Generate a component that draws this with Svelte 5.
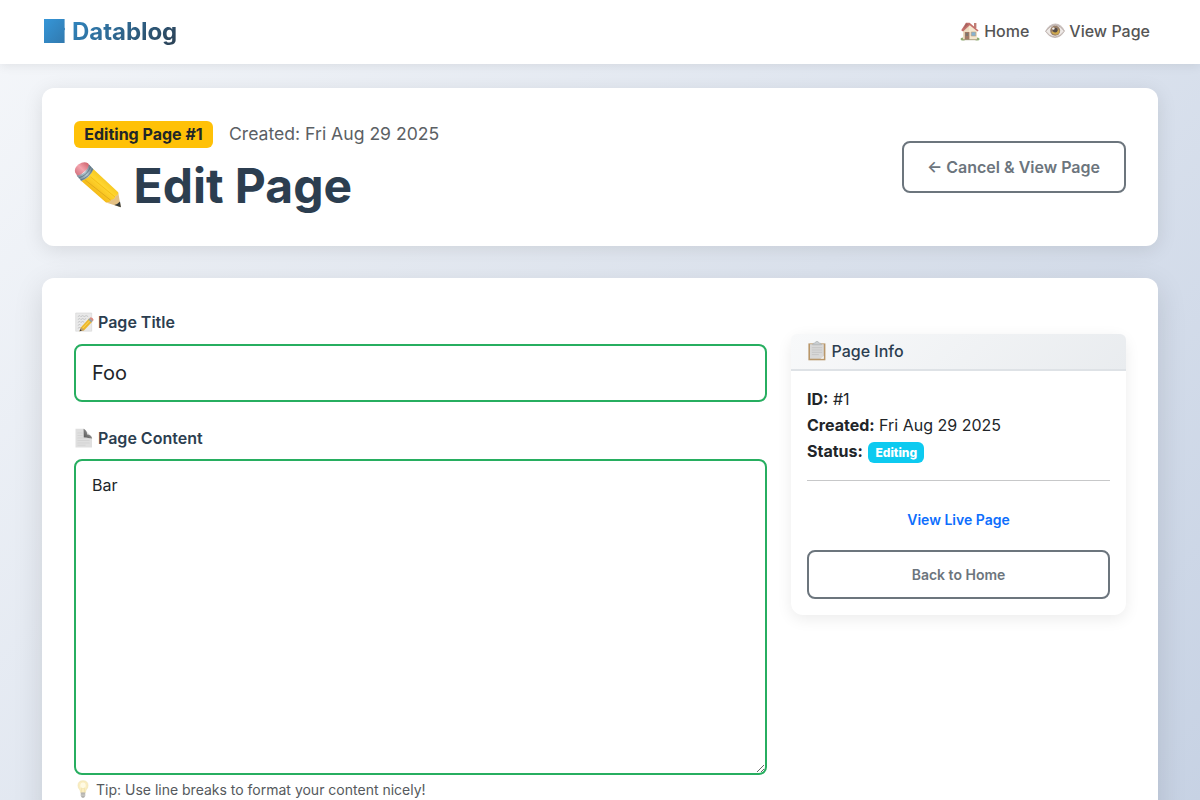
<script>
  let title = $state('Foo');
  let content = $state('Bar');
</script>

<div class="page">
  <header class="nav">
    <a class="brand" href="#home">
      <svg class="book" viewBox="0 0 22 24" width="22" height="24" aria-hidden="true">
        <defs>
          <linearGradient id="bookfill" x1="0" y1="0" x2="1" y2="1">
            <stop offset="0" stop-color="#3596d8" />
            <stop offset="1" stop-color="#3179ae" />
          </linearGradient>
        </defs>
        <path d="M0 0H20.6V8.5Q21.6 10 20.6 11.5V24H0Z" fill="url(#bookfill)" />
      </svg>
      <span>Datablog</span>
    </a>
    <nav class="links">
      <a href="#home">
        <svg viewBox="0 0 20 20" width="20" height="20" aria-hidden="true">
          <ellipse cx="3" cy="18" rx="2.5" ry="1.5" fill="#8fae72" />
          <ellipse cx="17.2" cy="18" rx="2.4" ry="1.5" fill="#8fae72" />
          <path d="M14 2h2.4v5H14z" fill="#c07e74" />
          <path d="M3 9L9.8 3L16.6 9V18.7H3z" fill="#eddcc2" />
          <path d="M9 3.1L16.9 10V18.7H9V9z" fill="#f5e7ce" />
          <path d="M1.2 9.2L6 1.8H9.6L18.6 9.5L17.5 10.6L9.8 4.2L3 10.5z" fill="#c4706c" />
          <path d="M6 2.2L3.5 8L8.3 3.3" fill="#a3645f" />
          <path d="M4.8 11h4.6v7.8H4.8z" fill="#a17a66" />
          <path d="M5.7 12h2.5v3H5.7z" fill="#7c766e" />
          <path d="M11.2 11h4.6v4h-4.6z" fill="#86b2d0" stroke="#be9d7b" stroke-width=".6" />
          <path d="M2.6 18.7H17" stroke="#9a9070" stroke-width=".8" />
        </svg>
        <span>Home</span>
      </a>
      <a href="#view">
        <svg viewBox="0 0 20 20" width="20" height="20" aria-hidden="true">
          <path d="M.3 10Q4.2 2.4 10.4 2.4Q16.5 2.4 19.8 10Q16 17 10 17Q4 17 .3 10" fill="#cbc1be" />
          <path d="M.6 10.2Q5 4.2 10.4 4.2Q15.5 4.2 19.4 10.2Q15 16 10 16Q4.5 16 .6 10.2" fill="#eee9e6" stroke="#a39390" stroke-width=".6" />
          <circle cx="10.2" cy="9.8" r="5" fill="#9a8068" />
          <path d="M6.2 11Q9 15 13.5 12.7Q15 10.9 14 8.5L10 10z" fill="#cfa94e" />
          <circle cx="10.2" cy="9.2" r="2.4" fill="#554c48" />
          <circle cx="8.4" cy="7.6" r="1.2" fill="#f5f0ec" />
        </svg>
        <span>View Page</span>
      </a>
    </nav>
  </header>

  <main>
    <section class="card hero">
      <div class="heading">
        <div class="meta">
          <span class="badge">Editing Page #1</span>
          <span class="created">Created: Fri Aug 29 2025</span>
        </div>
        <h1>
          <svg viewBox="0 0 48 48" width="48" height="48" aria-hidden="true">
            <defs>
              <linearGradient id="wood" x1="0" y1="1" x2="1" y2="0">
                <stop offset="0" stop-color="#d99b0b" />
                <stop offset=".3" stop-color="#f3b716" />
                <stop offset=".55" stop-color="#ffd62f" />
                <stop offset="1" stop-color="#dda107" />
              </linearGradient>
              <linearGradient id="rubber" x1="0" y1="1" x2="1" y2="0">
                <stop offset="0" stop-color="#ca6471" />
                <stop offset=".5" stop-color="#f3a3ad" />
                <stop offset="1" stop-color="#c5525d" />
              </linearGradient>
              <linearGradient id="band" x1="0" y1="1" x2="1" y2="0">
                <stop offset="0" stop-color="#617a8a" />
                <stop offset=".5" stop-color="#b4c5ce" />
                <stop offset="1" stop-color="#4c6574" />
              </linearGradient>
            </defs>
            <path d="M1.2 11.5Q-.2 7 4.8 3.3Q9.7-.1 14 2.3L16.4 5.8L4 16z" fill="url(#rubber)" />
            <path d="M2.6 14.4Q8.5 14 11.6 10Q14.6 7 15 3.6L19.7 8.4Q19.2 17 7.6 20.2z" fill="url(#band)" />
            <path d="M4.8 16.8Q13.2 14.6 16.5 5.8M6.5 19Q15.7 16.3 18.4 7.7" fill="none" stroke="#506a79" stroke-width=".7" />
            <path d="M7.4 20Q15.8 17.2 19.5 8.3L44.2 31.2Q45 34 41.5 35.7Q41 39 37.6 39.2Q35.6 42 32 41.4z" fill="url(#wood)" />
            <path d="M11.2 19L36.7 39.3" stroke="#dba318" stroke-width=".8" />
            <path d="M16.4 15.8L41 36" stroke="#f5bf16" stroke-width="1" />
            <path d="M32 41.4Q35.5 41.8 37.5 38.4Q41 38.6 41.4 35Q44.7 34 44.2 31.2L46.8 46.2z" fill="#e5c184" />
            <path d="M40.3 43.9Q43.7 43.2 46 40.5L46.9 46.3z" fill="#363b3a" />
          </svg>
          <span>Edit Page</span>
        </h1>
      </div>
      <a class="button cancel" href="#view">← Cancel &amp; View Page</a>
    </section>

    <section class="card editor">
      <form class="fields">
        <label class="title-label" for="title">
          <svg viewBox="0 0 20 20" width="20" height="20" aria-hidden="true">
            <path d="M1.7 1h16v18.2h-16z" fill="#e9e9e9" stroke="#d3d3d3" stroke-width=".6" />
            <path d="M3.8 4.6l2-1 1 1 2-1 1.4 1 2-1 2 1M3.8 7.5l2-1 1 1 2-1 1.4 1 2-1M3.8 10.4l2-1 1 1 2-1 1.4 1M3.8 13.4l2-1 1 1 M3.8 16.3l2-1 1 1" fill="none" stroke="#b5b6b7" stroke-width=".7" />
            <path d="M5.6 19.2L7 15.2L15 6.6L18.4 9.4L10.2 18.2z" fill="#ecb62a" />
            <path d="M8.4 16.4L16.6 7.9" stroke="#fbdc60" stroke-width="1" />
            <path d="M15.4 6.3L16.6 5.2Q19 5.2 19.7 7.9L18.6 9.2z" fill="#dc8a81" />
            <path d="M14.2 7.6l1.2-1.3 3.2 2.8-1.3 1.4z" fill="#93a0a2" />
            <path d="M5.6 19.2L7 15.2L10.2 18.2z" fill="#bd9d70" />
            <path d="M5.6 19.2l.6-2 1.6 1.3z" fill="#383938" />
          </svg>
          <span>Page Title</span>
        </label>
        <input id="title" bind:value={title} />

        <label class="content-label" for="content">
          <svg viewBox="0 0 20 20" width="20" height="20" aria-hidden="true">
            <defs>
              <linearGradient id="fold" x1="0" y1="1" x2="1" y2="0">
                <stop offset="0" stop-color="#555" />
                <stop offset=".4" stop-color="#777" />
                <stop offset="1" stop-color="#b8b8b8" />
              </linearGradient>
            </defs>
            <path d="M1.5.8H10L18 9V19.4H1.5z" fill="#dfdfdf" />
            <path d="M9.6.8Q13 2.4 13.2 6.6Q17 6.8 18.2 10.4L9.8 9.4z" fill="url(#fold)" />
            <path d="M3.5 5h5M3.5 7.5h5M3.5 10h10M3.5 12.5h12M3.5 15h12M3.5 17.3h8" stroke="#d0d0d0" stroke-width=".7" />
          </svg>
          <span>Page Content</span>
        </label>
        <textarea id="content" bind:value={content}></textarea>
        <p class="tip">
          <svg viewBox="0 0 18 18" width="18" height="18" aria-hidden="true">
            <path d="M4 5.6Q4 .7 9 .7T14 5.6Q14 8.2 12 10L11.2 13H6.8L6 10Q4 8.2 4 5.6z" fill="#faedc0" stroke="#efe2b2" stroke-width=".6" />
            <ellipse cx="9" cy="5.6" rx="2.7" ry="3.2" fill="#fffae3" />
            <path d="M7.5 12V7.8l1.5 1 1.5-1V12" fill="none" stroke="#f0dfa4" stroke-width=".6" />
            <path d="M6.8 12.6h4.4v3.4L10 17.8H8L6.8 16z" fill="#b0afab" />
            <path d="M6.8 14.2h4.4M6.8 15.6h4.4" stroke="#d6d5d0" stroke-width=".6" />
          </svg>
          <span>Tip: Use line breaks to format your content nicely!</span>
        </p>
      </form>

      <aside>
        <h2>
          <svg viewBox="0 0 20 20" width="20" height="20" aria-hidden="true">
            <path d="M1.4 2.4h17v16.9h-17z" fill="#b9976a" />
            <path d="M3 3.2h13.8v14.5H3z" fill="#d8d8d8" />
            <path d="M4.8 6.7h10.3M4.8 9h10.3M4.8 11.3h10.3M4.8 13.6h7" stroke="#c6c6c6" stroke-width="1" />
            <path d="M13.5 17.7l3.3-3v3z" fill="#f0f0ef" />
            <path d="M5.5 3.8Q5.7 1.8 8.3 1.8Q8.5.3 10 .3T11.7 1.8Q14.3 1.8 14.5 3.8z" fill="#c9cdd0" stroke="#a0a6aa" stroke-width=".5" />
          </svg>
          <span>Page Info</span>
        </h2>
        <div class="info">
          <p><strong>ID:</strong> #1</p>
          <p><strong>Created:</strong> Fri Aug 29 2025</p>
          <p><strong>Status:</strong> <span class="status">Editing</span></p>
          <hr />
          <a class="live" href="#view">View Live Page</a>
          <a class="button back" href="#home">Back to Home</a>
        </div>
      </aside>
    </section>
  </main>
</div>

<style>
  :global(body) { margin: 0; }
  * { box-sizing: border-box; }
  .page {
    height: 100vh;
    overflow: hidden;
    font: 16px/26px Inter, sans-serif;
    color: #212529;
    background: linear-gradient(135deg, #f5f7fa 0%, #c3cfe2 100%) 0 0 / 100% 974px no-repeat;
  }
  a { text-decoration: none; }
  svg { display: block; flex: none; }
  h1, h2, p { margin: 0; }
  .nav {
    height: 64px;
    padding: 0 50px 2px 44px;
    display: flex;
    align-items: center;
    justify-content: space-between;
    background: #fff;
    box-shadow: 0 2px 10px rgba(0, 0, 0, .08);
  }
  .brand {
    display: flex;
    align-items: center;
    gap: 6px;
    font-size: 24px;
    font-weight: 700;
    letter-spacing: -.05px;
  }
  .brand span {
    padding-top: 2px;
    color: transparent;
    background: linear-gradient(135deg, #3089c5, #2c3e50);
    background-clip: text;
    line-height: 36px;
  }
  .links { display: flex; gap: 16px; }
  .links a {
    display: flex;
    align-items: center;
    gap: 4px;
    color: #555;
    font-weight: 500;
  }
  main {
    padding: 24px 42px 0;
    display: flex;
    flex-direction: column;
    gap: 32px;
  }
  .card {
    background: #fff;
    border-radius: 12px;
    box-shadow: 0 4px 20px rgba(0, 0, 0, .1);
  }
  .hero {
    height: 158px;
    padding: 32px;
    display: flex;
    justify-content: space-between;
    align-items: center;
  }
  .heading { align-self: flex-start; }
  .meta { display: flex; align-items: center; gap: 16px; height: 28px; }
  .badge {
    width: 139px;
    height: 27px;
    border-radius: 6px;
    background: #ffc107;
    font-weight: 700;
    line-height: 27px;
    text-align: center;
  }
  .created { color: #5b6064; font-size: 17.6px; }
  h1 {
    display: flex;
    align-items: center;
    gap: 11.5px;
    margin-top: 9px;
    color: #2c3e50;
    font-size: 48px;
    font-weight: 700;
    line-height: 58px;
  }
  h1 svg { margin-bottom: 2px; }
  .button {
    display: flex;
    align-items: center;
    justify-content: center;
    border: 2px solid #6c757d;
    border-radius: 8px;
    color: #6c757d;
    font-weight: 600;
  }
  .cancel { width: 224px; height: 52px; padding-right: 1px; }
  .editor {
    height: 664px;
    padding: 31px 32px 32px;
    display: grid;
    grid-template-columns: 693px 335px;
    gap: 24px;
    box-shadow: 0 8px 30px rgba(0, 0, 0, .12);
  }
  label {
    display: flex;
    align-items: center;
    gap: 4px;
    height: 26px;
    color: #2c3e50;
    font-weight: 600;
  }
  .title-label { margin-bottom: 9px; }
  input, textarea {
    display: block;
    width: 100%;
    border: 2px solid #27ae60;
    border-radius: 8px;
    outline: none;
    color: #212529;
    background: #fff;
    font-family: Inter, sans-serif;
  }
  input { height: 58px; padding: 0 16px; font-size: 20px; }
  .content-label { margin: 23px 0 8px; }
  textarea { height: 316px; padding: 12px 16px; font-size: 16px; line-height: 24px; resize: vertical; }
  .tip {
    display: flex;
    align-items: center;
    gap: 4px;
    margin-top: 4px;
    color: #55595d;
    font-size: 14px;
    line-height: 22px;
  }
  .tip svg { margin-bottom: 2px; }
  aside {
    height: 281px;
    margin-top: 25px;
    border-radius: 12px;
    background: #fff;
    box-shadow: 0 4px 15px rgba(0, 0, 0, .08);
  }
  h2 {
    height: 37px;
    padding: 0 16px 1px;
    display: flex;
    align-items: center;
    gap: 4.5px;
    border-bottom: 2px solid #dee2e6;
    border-radius: 6px 6px 0 0;
    background: linear-gradient(135deg, #f8f9fa, #e9ecef);
    color: #2c3e50;
    font-size: 16px;
    font-weight: 500;
  }
  .info { padding: 15px 16px; }
  strong { font-weight: 700; }
  .status {
    display: inline-block;
    width: 56px;
    margin-left: 1px;
    border-radius: 6px;
    background: #0dcaf0;
    color: #fff;
    font-size: 12px;
    font-weight: 800;
    line-height: 21px;
    text-align: center;
  }
  hr { margin: 16px 0; border: 0; border-top: 1px solid #c7c8c9; }
  .live {
    display: block;
    height: 48px;
    color: #0d6efd;
    font-size: 14px;
    font-weight: 600;
    line-height: 45px;
    text-align: center;
  }
  .back { height: 49px; margin-top: 5px; font-size: 14px; }
</style>
